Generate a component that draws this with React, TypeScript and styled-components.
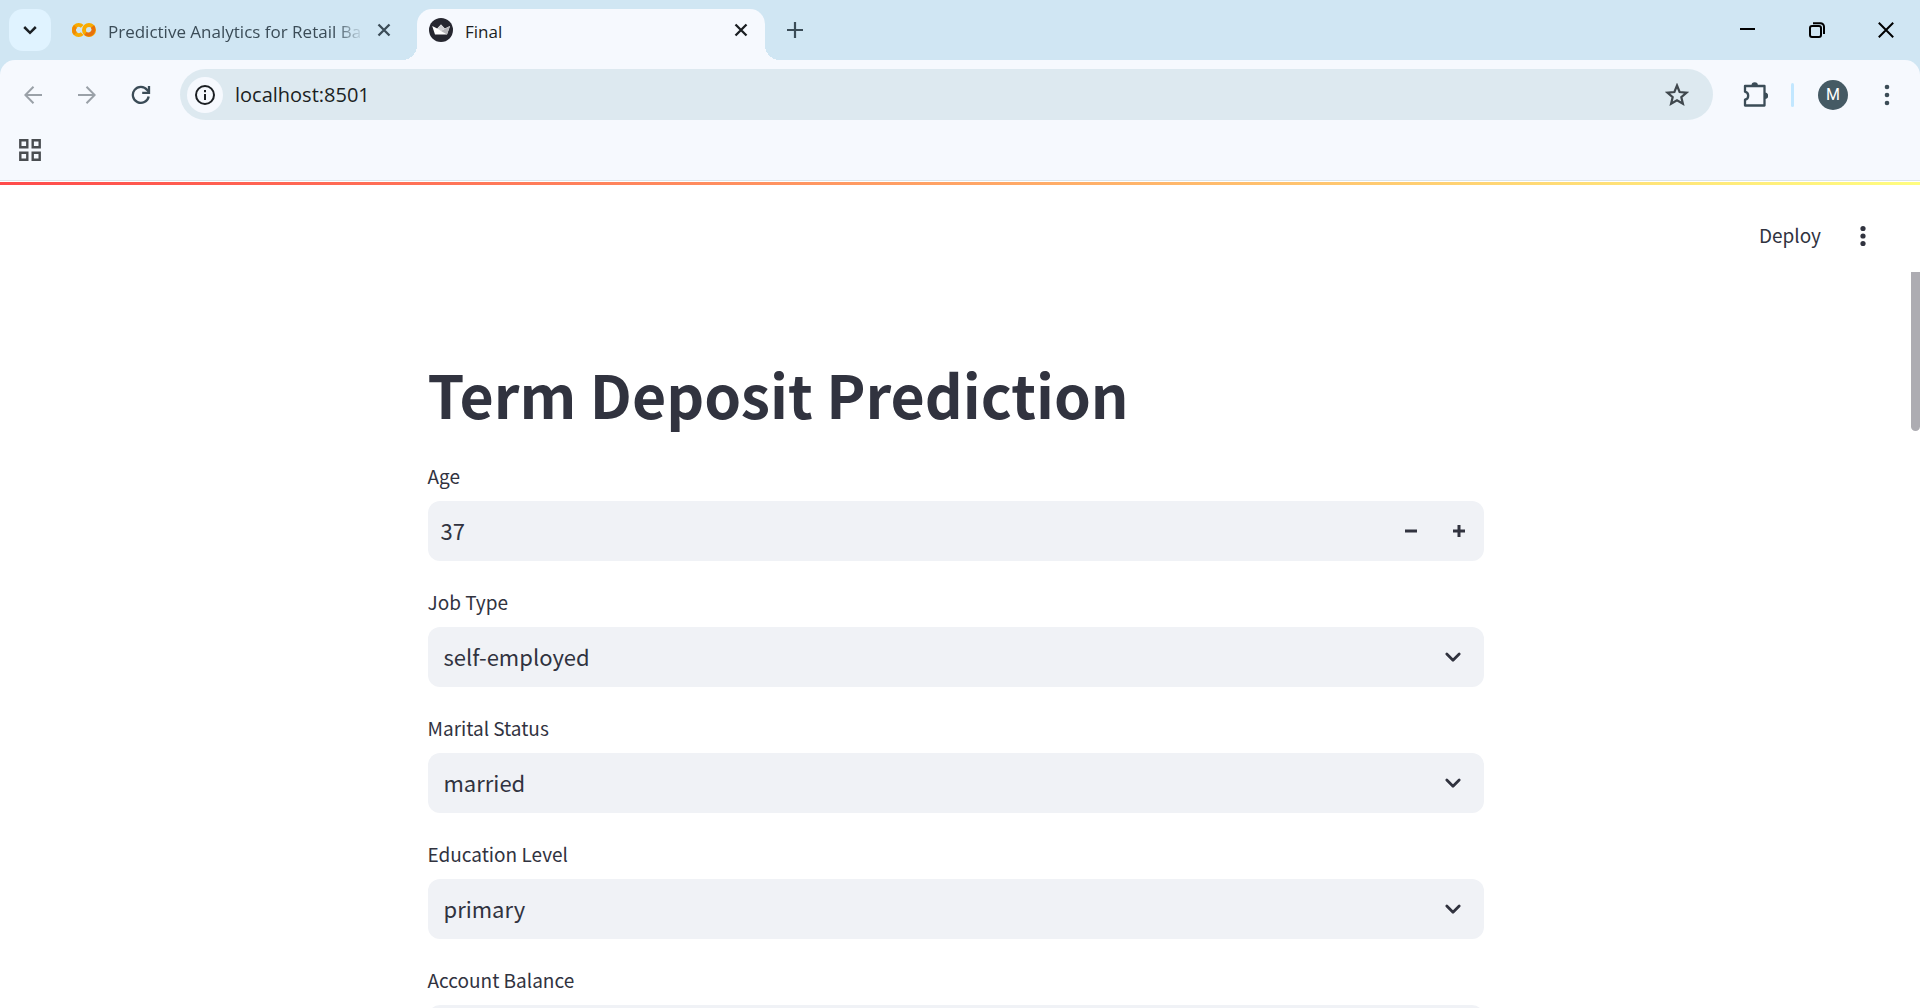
import React, { useState } from 'react';
import styled, { createGlobalStyle } from 'styled-components';

const uiFont = '"Open Sans", "Noto Sans", sans-serif';
const appFont = '"Noto Sans CJK SC", "Noto Sans", sans-serif';

const GlobalStyle = createGlobalStyle`
  *, *::before, *::after { box-sizing: border-box; }
  body { margin: 0; background: #fff; overflow: hidden; }
  button, input, select { font: inherit; color: inherit; }
  button { border: 0; padding: 0; background: none; cursor: pointer; }
`;

const Window = styled.div`
  display: flex;
  flex-direction: column;
  height: 100vh;
  overflow: hidden;
`;

/* Browser chrome */

const Chrome = styled.header`
  flex: none;
  background: #d0e6f3;
  font-family: ${uiFont};
`;

const TabStrip = styled.div`
  display: flex;
  align-items: center;
  height: 60px;
  padding-left: 9px;
`;

const IconButton = styled.button<{ $w: number; $h?: number; $color?: string }>`
  display: flex;
  flex: none;
  align-items: center;
  justify-content: center;
  width: ${p => p.$w}px;
  height: ${p => p.$h ?? p.$w}px;
  color: ${p => p.$color ?? '#3b4c57'};
`;

const TabSearch = styled(IconButton)`
  border-radius: 14px;
  background: #e0f3ff;
`;

const Tab = styled.div<{ $active?: boolean }>`
  position: relative;
  display: flex;
  align-items: center;
  align-self: flex-end;
  width: ${p => (p.$active ? 348 : 366)}px;
  height: 51px;
  padding: ${p => (p.$active ? '0 12px 9px 12px' : '0 21px 9px 21px')};
  border-radius: 15px 15px 0 0;
  color: ${p => (p.$active ? '#1b1f23' : '#3b4c57')};
  background: ${p => (p.$active ? '#f6f9fe' : 'transparent')};

  &::before, &::after {
    content: ${p => (p.$active ? '""' : 'none')};
    position: absolute;
    bottom: 0;
    width: 15px;
    height: 15px;
  }
  &::before {
    left: -15px;
    background: radial-gradient(circle at 0 0, transparent 15px, #f6f9fe 15px);
  }
  &::after {
    right: -15px;
    background: radial-gradient(circle at 100% 0, transparent 15px, #f6f9fe 15px);
  }
`;

const TabTitle = styled.span<{ $fade?: boolean }>`
  flex: 1;
  min-width: 0;
  margin: 0 0 0 12px;
  overflow: hidden;
  white-space: nowrap;
  font-size: 17px;
  line-height: 24px;
  padding-top: 4px;
  mask-image: ${p => (p.$fade ? 'linear-gradient(to right, #000 226px, transparent 256px)' : 'none')};
`;

const WindowControls = styled.div`
  display: flex;
  margin-left: auto;
`;

const Toolbar = styled.div`
  display: flex;
  align-items: center;
  height: 69px;
  padding: 0 9px 0 6px;
  border-radius: 15px 15px 0 0;
  background: #f6f9fe;
`;

const Omnibox = styled.div`
  display: flex;
  flex: 1;
  align-items: center;
  height: 51px;
  margin: 0 18px 0 12px;
  padding: 0 18px 0 7px;
  border-radius: 26px;
  background: #dde9f0;
`;

const SiteInfo = styled(IconButton)`
  border-radius: 50%;
  background: #f6f9fe;
`;

const Address = styled.input`
  flex: 1;
  min-width: 0;
  margin-left: 12px;
  padding: 0;
  border: 0;
  outline: 0;
  background: none;
  color: #1b1f23;
  font-size: 20px;
  line-height: 30px;
`;

const Divider = styled.span`
  width: 3px;
  height: 24px;
  margin: 0 9px 0 12px;
  border-radius: 2px;
  background: #c2e7ff;
`;

const Avatar = styled.span`
  display: flex;
  align-items: center;
  justify-content: center;
  width: 30px;
  height: 30px;
  border-radius: 50%;
  background: #455a64;
  color: #fff;
  font-family: Roboto, sans-serif;
  font-size: 16px;
`;

const BookmarkBar = styled.div`
  display: flex;
  align-items: center;
  height: 52px;
  padding: 0 9px 9px;
  border-bottom: 1px solid #dbe4ea;
  background: #f6f9fe;
`;

/* Page */

const Decoration = styled.div`
  flex: none;
  height: 3px;
  margin-top: 1px;
  background: linear-gradient(90deg, #ff4b4b, #fffd80);
`;

const AppHeader = styled.header`
  display: flex;
  flex: none;
  align-items: center;
  justify-content: flex-end;
  height: 87px;
  padding: 14px 39px 0 24px;
  color: #31333f;
  font-family: ${appFont};
`;

const DeployButton = styled.button`
  height: 36px;
  margin-right: 24px;
  padding-bottom: 2px;
  font-size: 19px;
  line-height: 34px;
`;

const Body = styled.div`
  display: flex;
  flex: 1;
  min-height: 0;
`;

const Main = styled.main`
  flex: 1;
  min-width: 0;
  overflow: hidden;
  color: #31333f;
  font-family: ${appFont};
`;

const Block = styled.form`
  display: flex;
  flex-direction: column;
  gap: 24px;
  max-width: 1104px;
  margin: 0 auto;
  padding: 84px 24px 96px;
`;

const Title = styled.h1`
  margin: 0;
  padding-bottom: 4px;
  font-size: 59px;
  line-height: 75px;
  font-weight: 700;
`;

const ScrollTrack = styled.div`
  flex: none;
  width: 9px;
`;

const ScrollThumb = styled.div`
  height: 159px;
  border-radius: 0 0 5px 5px;
  background: #adacb2;
`;

const Field = styled.div`
  display: flex;
  flex-direction: column;
  gap: 6px;
`;

const Label = styled.label`
  align-self: flex-start;
  padding-bottom: 2px;
  font-size: 19px;
  line-height: 34px;
`;

const Control = styled.div`
  position: relative;
  display: flex;
  align-items: center;
  height: 60px;
  border-radius: 12px;
  background: #f0f2f6;
  overflow: hidden;
`;

const NumberBox = styled.input`
  flex: 1;
  min-width: 0;
  height: 60px;
  padding: 0 13px 2px;
  border: 0;
  outline: 0;
  background: none;
  font-size: 22px;
  line-height: 36px;
  appearance: textfield;

  &::-webkit-inner-spin-button { appearance: none; margin: 0; }
`;

const SelectBox = styled.select`
  flex: 1;
  height: 60px;
  padding: 0 60px 2px 16px;
  border: 0;
  outline: 0;
  background: none;
  font-size: 22px;
  line-height: 36px;
  appearance: none;
`;

const Chevron = styled.svg`
  position: absolute;
  right: 22px;
  pointer-events: none;
`;

const CloseIcon = () => (
  <svg width="14" height="14" viewBox="0 0 14 14" fill="none" stroke="currentColor" strokeWidth="2.3">
    <path d="M1.5 1.5l11 11M12.5 1.5l-11 11" />
  </svg>
);

const DotsIcon = ({ gap, r }: { gap: number; r: number }) => (
  <svg width="8" height="26" viewBox="0 0 8 26" fill="currentColor">
    <circle cx="4" cy={13 - gap} r={r} /><circle cx="4" cy="13" r={r} /><circle cx="4" cy={13 + gap} r={r} />
  </svg>
);

const ArrowIcon = ({ right }: { right?: boolean }) => (
  <svg width="18" height="18" viewBox="0 0 18 18" fill="none" stroke="currentColor" strokeWidth="2">
    <path d={right ? 'M0 9h16.5M8.5 .8L16.7 9l-8.2 8.2' : 'M18 9H1.5M9.5 .8L1.3 9l8.2 8.2'} />
  </svg>
);

const ColabIcon = () => (
  <svg width="24" height="24" viewBox="0 0 24 24" fill="none" strokeWidth="4">
    <path d="M10.200 8.400a5 5 0 1 0 0 7.200" stroke="#f9ab00" />
    <path d="M3.500 8.500a5 5 0 0 0 0 7" stroke="#f08a05" />
    <circle cx="17" cy="12" r="5" stroke="#f9ab00" />
    <path d="M20.500 8.500a5 5 0 0 1-7 7" stroke="#e8710a" />
  </svg>
);

const CrownIcon = () => (
  <svg width="24" height="24" viewBox="0 0 24 24">
    <circle cx="12" cy="12" r="12" fill="#262730" />
    <path d="M3.200 8l5 2.500L12 6.500l3.800 4L21 8l-3 8.500H6z" fill="#fff" />
    <path d="M12 6.500l3.800 4L12 13l-3.800-2.500z" fill="#d0d0d3" />
    <path d="M21 8l-3 8.500L12 13z" fill="#b5b5b9" />
  </svg>
);

type NumberFieldProps = { id: string; label: string; initial?: number };

function NumberField({ id, label, initial }: NumberFieldProps) {
  const [value, setValue] = useState<number | ''>(initial ?? '');
  const step = (by: number) => setValue(Number(value) + by);
  return (
    <Field>
      <Label htmlFor={id}>{label}</Label>
      <Control>
        <NumberBox
          id={id}
          type="number"
          value={value}
          onChange={e => setValue(e.target.value === '' ? '' : Number(e.target.value))}
        />
        <IconButton type="button" $w={48} $h={60} $color="#31333f" aria-label={`Decrease ${label}`} onClick={() => step(-1)}>
          <svg width="12" height="12" viewBox="0 0 12 12"><path d="M0 4.500h12v3H0z" fill="currentColor" /></svg>
        </IconButton>
        <IconButton type="button" $w={49} $h={60} $color="#31333f" aria-label={`Increase ${label}`} onClick={() => step(1)}>
          <svg width="12" height="12" viewBox="0 0 12 12">
            <path d="M0 4.500h4.500V0h3v4.500H12v3H7.500V12h-3V7.500H0z" fill="currentColor" />
          </svg>
        </IconButton>
      </Control>
    </Field>
  );
}

type SelectFieldProps = { id: string; label: string; options: string[]; initial: string };

function SelectField({ id, label, options, initial }: SelectFieldProps) {
  return (
    <Field>
      <Label htmlFor={id}>{label}</Label>
      <Control>
        <SelectBox id={id} defaultValue={initial}>
          {options.map(o => <option key={o}>{o}</option>)}
        </SelectBox>
        <Chevron width="18" height="18" viewBox="0 0 18 18" fill="none" stroke="#31333f" strokeWidth="2.800" strokeLinecap="round" strokeLinejoin="round">
          <path d="M2.800 6L9 12.200 15.200 6" />
        </Chevron>
      </Control>
    </Field>
  );
}

export default function App() {
  return (
    <Window>
      <GlobalStyle />
      <Chrome>
        <TabStrip>
          <TabSearch $w={42} $color="#1b1f23" aria-label="Search tabs">
            <svg width="14" height="14" viewBox="0 0 14 14" fill="none" stroke="currentColor" strokeWidth="2.500">
              <path d="M1.200 4L7 9.800 12.800 4" />
            </svg>
          </TabSearch>
          <Tab>
            <ColabIcon />
            <TabTitle $fade>Predictive Analytics for Retail Ba</TabTitle>
            <IconButton $w={24} aria-label="Close tab"><CloseIcon /></IconButton>
          </Tab>
          <Tab $active>
            <CrownIcon />
            <TabTitle>Final</TabTitle>
            <IconButton $w={24} $color="#1b1f23" aria-label="Close tab"><CloseIcon /></IconButton>
          </Tab>
          <IconButton $w={60} aria-label="New tab">
            <svg width="16" height="16" viewBox="0 0 16 16" fill="none" stroke="currentColor" strokeWidth="2.200">
              <path d="M8 0v16M0 8h16" />
            </svg>
          </IconButton>
          <WindowControls>
            <IconButton $w={69} $h={60} $color="#000" aria-label="Minimize">
              <svg width="16" height="16" viewBox="0 0 16 16"><path d="M0 6h15v2H0z" /></svg>
            </IconButton>
            <IconButton $w={69} $h={60} $color="#000" aria-label="Restore">
              <svg width="16" height="16" viewBox="0 0 16 16" fill="none" stroke="currentColor" strokeWidth="2">
                <rect x="1" y="4" width="11" height="11" rx="2" />
                <path d="M4 1.200h7.500a3.500 3.500 0 0 1 3.500 3.500V12" />
              </svg>
            </IconButton>
            <IconButton $w={69} $h={60} $color="#000" aria-label="Close window">
              <svg width="16" height="16" viewBox="0 0 16 16" stroke="currentColor" strokeWidth="2"><path d="M.8.8l14.400 14.400M15.200.8L.8 15.200" /></svg>
            </IconButton>
          </WindowControls>
        </TabStrip>
        <Toolbar>
          <IconButton $w={54} $color="#9aa1a8" aria-label="Back"><ArrowIcon /></IconButton>
          <IconButton $w={54} $color="#9aa1a8" aria-label="Forward"><ArrowIcon right /></IconButton>
          <IconButton $w={54} aria-label="Reload">
            <svg width="20" height="20" viewBox="0 0 20 20" fill="none" stroke="currentColor" strokeWidth="2.300">
              <path d="M17.700 11.500A8 8 0 1 1 16.200 5l1.800 2" />
              <path d="M18 1v6.800h-6.800" />
            </svg>
          </IconButton>
          <Omnibox>
            <SiteInfo $w={36} $color="#1b1f23" aria-label="View site information">
              <svg width="20" height="20" viewBox="0 0 20 20" fill="none" stroke="currentColor" strokeWidth="2">
                <circle cx="10" cy="10" r="9" /><path d="M10 9v6M10 5v2.200" />
              </svg>
            </SiteInfo>
            <Address aria-label="Address" defaultValue="localhost:8501" />
            <IconButton $w={36} $color="#40484e" aria-label="Bookmark this page">
              <svg width="24" height="24" viewBox="0 0 24 24" fill="none" stroke="currentColor" strokeWidth="2.200">
                <path d="M12 2.500l2.600 6.500 7 .6-5.300 4.500 1.600 6.700L12 17.200l-5.900 3.600 1.600-6.700L2.400 9.600l7-.6z" />
              </svg>
            </IconButton>
          </Omnibox>
          <IconButton $w={48} aria-label="Extensions">
            <svg width="26" height="26" viewBox="0 0 26 26" fill="none" stroke="currentColor" strokeWidth="2.300" strokeLinejoin="round">
              <path d="M3 4h19.500v19.500H3v-5.800a4.100 4.100 0 0 0 0-8z" />
              <path d="M9.500 3.500a3.200 3.200 0 0 1 6.400 0zM23 10.600a3.200 3.200 0 0 1 0 6.400z" fill="currentColor" stroke="none" />
            </svg>
          </IconButton>
          <Divider />
          <IconButton $w={60} aria-label="Profile"><Avatar>M</Avatar></IconButton>
          <IconButton $w={48} aria-label="Browser menu"><DotsIcon gap={8} r={2.3} /></IconButton>
        </Toolbar>
        <BookmarkBar>
          <IconButton $w={42} $color="#4a4d51" aria-label="Apps">
            <svg width="22" height="22" viewBox="0 0 22 22" fill="none" stroke="currentColor" strokeWidth="2.400">
              <path d="M1.300 1.300h7v7h-7zM13.700 1.300h7v7h-7zM1.300 13.700h7v7h-7zM13.700 13.700h7v7h-7z" />
            </svg>
          </IconButton>
        </BookmarkBar>
      </Chrome>
      <Decoration />
      <AppHeader>
        <DeployButton>Deploy</DeployButton>
        <IconButton $w={36} $color="#31333f" aria-label="Main menu"><DotsIcon gap={7.5} r={2.6} /></IconButton>
      </AppHeader>
      <Body>
        <Main>
          <Block>
            <Title>Term Deposit Prediction</Title>
            <NumberField id="age" label="Age" initial={37} />
            <SelectField id="job" label="Job Type" initial="self-employed" options={['self-employed', 'management', 'technician', 'services']} />
            <SelectField id="marital" label="Marital Status" initial="married" options={['married', 'single', 'divorced']} />
            <SelectField id="education" label="Education Level" initial="primary" options={['primary', 'secondary', 'tertiary']} />
            <NumberField id="balance" label="Account Balance" />
          </Block>
        </Main>
        <ScrollTrack><ScrollThumb /></ScrollTrack>
      </Body>
    </Window>
  );
}
